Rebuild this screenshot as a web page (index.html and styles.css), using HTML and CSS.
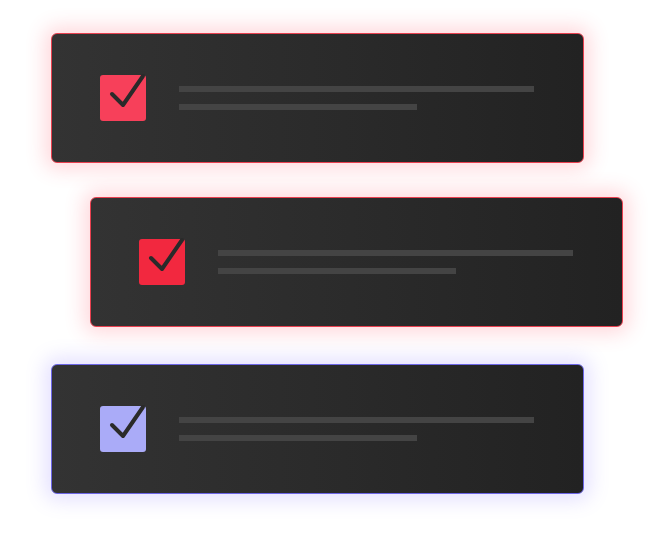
FILE: index.html
```html
<!DOCTYPE html>
<html>
<head>
<meta charset="utf-8">
<link rel="stylesheet" href="styles.css">
</head>
<body>
<div class="stack">
  <div class="card card-red">
    <div class="box box-pink">
      <svg class="check" viewBox="0 0 46 46" width="46" height="46"><path d="M12 19 L23 30 L43 1"/></svg>
    </div>
    <div class="lines">
      <div class="line line-long"></div>
      <div class="line line-short"></div>
    </div>
  </div>
  <div class="card card-red shifted">
    <div class="box box-red">
      <svg class="check" viewBox="0 0 46 46" width="46" height="46"><path d="M12 19 L23 30 L43 1"/></svg>
    </div>
    <div class="lines">
      <div class="line line-long"></div>
      <div class="line line-short"></div>
    </div>
  </div>
  <div class="card card-purple">
    <div class="box box-lav">
      <svg class="check" viewBox="0 0 46 46" width="46" height="46"><path d="M12 19 L23 30 L43 1"/></svg>
    </div>
    <div class="lines">
      <div class="line line-long"></div>
      <div class="line line-short"></div>
    </div>
  </div>
</div>
</body>
</html>
```
FILE: styles.css
```css
html, body {
  margin: 0;
  padding: 0;
  background: #ffffff;
}
body {
  min-height: 100vh;
}
.stack {
  display: flex;
  flex-direction: column;
  align-items: flex-start;
  padding: 33px 0 48px 51px;
  gap: 34px;
}
.card {
  box-sizing: border-box;
  width: 533px;
  height: 130px;
  border-radius: 6px;
  background: linear-gradient(90deg, #333333 0%, #2a2a2a 55%, #222222 100%);
  display: flex;
  align-items: center;
  padding-left: 48px;
  gap: 33px;
}
.card-red {
  border: 1px solid #e8404f;
  box-shadow: 0 0 20px 6px rgba(255, 60, 80, 0.2);
}
.card-purple {
  border: 1px solid #6c66e6;
  box-shadow: 0 0 20px 6px rgba(120, 100, 255, 0.2);
  margin-top: 3px;
}
.shifted {
  margin-left: 39px;
}
.box {
  position: relative;
  width: 46px;
  height: 46px;
  border-radius: 3px;
  flex: none;
}
.box-pink { background: #f7405a; }
.box-red { background: #f2283f; }
.box-lav { background: #aaabf8; }
.check {
  position: absolute;
  left: 0;
  top: 0;
  overflow: visible;
}
.check path {
  fill: none;
  stroke: #2a2a2a;
  stroke-width: 4;
  stroke-linecap: round;
  stroke-linejoin: round;
}
.lines {
  display: flex;
  flex-direction: column;
  gap: 12px;
}
.line {
  height: 6px;
  background: #444444;
}
.line-long { width: 355px; }
.line-short { width: 238px; }
```
